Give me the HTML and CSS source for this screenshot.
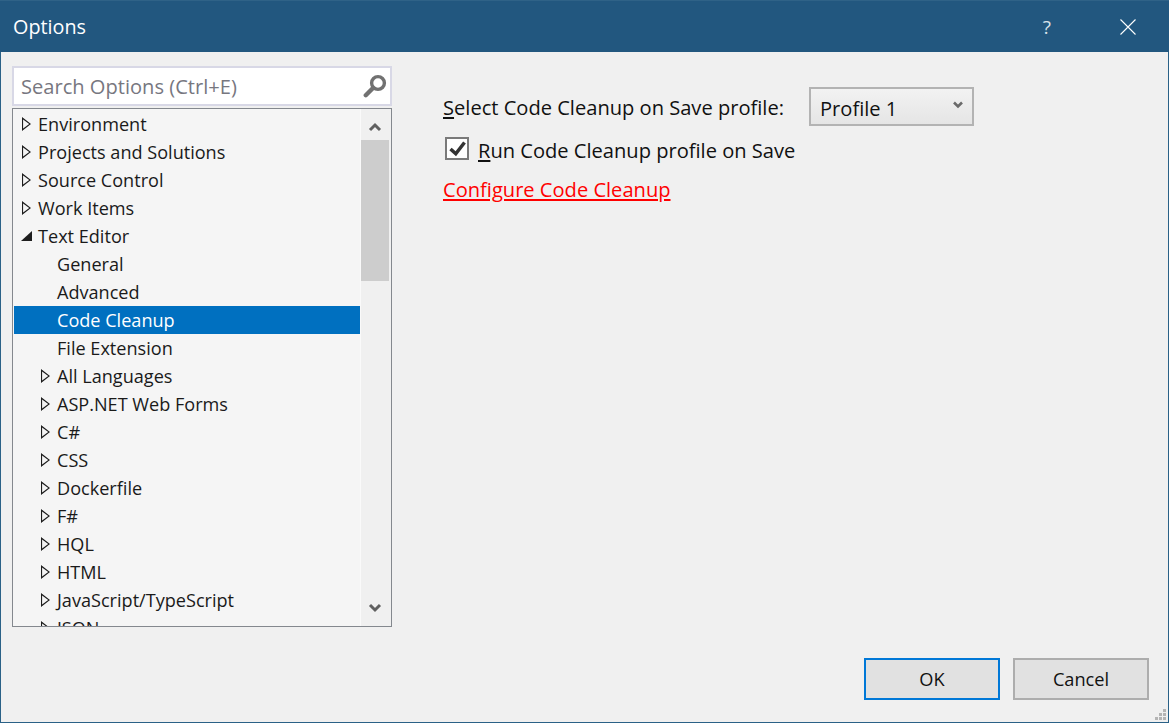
FILE: index.html
```html
<!DOCTYPE html>
<html lang="en">

<head>
    <meta charset="UTF-8">
    <meta name="viewport" content="width=device-width, initial-scale=1.0">
    <title>Options</title>
    <link rel="stylesheet" href="styles.css">
</head>

<body>
    <div class="dialog">
        <header class="titlebar">
            <span class="title">Options</span>
            <span class="help">?</span>
            <svg class="close" width="16" height="16" viewBox="0 0 16 16">
                <path d="M0.5 0.5 L15.5 15.5 M15.5 0.5 L0.5 15.5" stroke="#fff" stroke-width="1.1" fill="none" />
            </svg>
        </header>

        <main class="content">
            <aside class="sidebar">
                <div class="search">
                    <span class="search-text">Search Options (Ctrl+E)</span>
                    <svg width="24" height="24" viewBox="0 0 24 24">
                        <circle cx="15" cy="9" r="6.4" fill="none" stroke="#717171" stroke-width="3.4" />
                        <path d="M10 14 L2.8 21.2" stroke="#717171" stroke-width="4.4" stroke-linecap="round" />
                    </svg>
                </div>
                <div class="tree">
                    <ul class="rows">
                        <li class="row"><i class="arrow"></i>Environment</li>
                        <li class="row"><i class="arrow"></i>Projects and Solutions</li>
                        <li class="row"><i class="arrow"></i>Source Control</li>
                        <li class="row"><i class="arrow"></i>Work Items</li>
                        <li class="row"><i class="arrow open"></i>Text Editor</li>
                        <li class="row sub leaf">General</li>
                        <li class="row sub leaf">Advanced</li>
                        <li class="row sub leaf selected">Code Cleanup</li>
                        <li class="row sub leaf">File Extension</li>
                        <li class="row sub"><i class="arrow"></i>All Languages</li>
                        <li class="row sub"><i class="arrow"></i>ASP.NET Web Forms</li>
                        <li class="row sub"><i class="arrow"></i>C#</li>
                        <li class="row sub"><i class="arrow"></i>CSS</li>
                        <li class="row sub"><i class="arrow"></i>Dockerfile</li>
                        <li class="row sub"><i class="arrow"></i>F#</li>
                        <li class="row sub"><i class="arrow"></i>HQL</li>
                        <li class="row sub"><i class="arrow"></i>HTML</li>
                        <li class="row sub"><i class="arrow"></i>JavaScript/TypeScript</li>
                        <li class="row sub"><i class="arrow"></i>JSON</li>
                    </ul>
                    <div class="scrollbar">
                        <div class="scroll-btn">
                            <svg width="14" height="10" viewBox="0 0 14 10">
                                <path d="M2 8 L7 3 L12 8" fill="none" stroke="#606060" stroke-width="3" />
                            </svg>
                        </div>
                        <div class="thumb"></div>
                        <div class="scroll-btn down">
                            <svg width="14" height="10" viewBox="0 0 14 10">
                                <path d="M2 2 L7 7 L12 2" fill="none" stroke="#606060" stroke-width="3" />
                            </svg>
                        </div>
                    </div>
                </div>
            </aside>

            <section class="settings">
                <div class="profile-line">
                    <label class="profile-label"><u>S</u>elect Code Cleanup on Save profile:</label>
                    <div class="dropdown">
                        <span>Profile 1</span>
                        <svg width="10" height="8" viewBox="0 0 10 8">
                            <path d="M1 1.5 L5 5.5 L9 1.5" fill="none" stroke="#6a6a6a" stroke-width="2.6" />
                        </svg>
                    </div>
                </div>
                <div class="check-line">
                    <span class="checkbox">
                        <svg width="20" height="19" viewBox="0 0 20 19">
                            <path d="M3.5 10 L8.8 14.8 L17.5 3.5" fill="none" stroke="#333" stroke-width="3.5" />
                        </svg>
                    </span>
                    <span><u>R</u>un Code Cleanup profile on Save</span>
                </div>
                <a class="link" href="#">Configure Code Cleanup</a>
            </section>
        </main>

        <footer class="footer">
            <button class="btn default">OK</button>
            <button class="btn">Cancel</button>
            <svg class="grip" width="12" height="12" viewBox="0 0 12 12" fill="#b4b4b4">
                <rect x="8" y="0" width="3" height="3" />
                <rect x="4" y="4" width="3" height="3" />
                <rect x="8" y="4" width="3" height="3" />
                <rect x="0" y="8" width="3" height="3" />
                <rect x="4" y="8" width="3" height="3" />
                <rect x="8" y="8" width="3" height="3" />
            </svg>
        </footer>
    </div>
</body>

</html>
```

FILE: styles.css
```css
* {
    padding: 0;
    margin: 0;
    box-sizing: border-box;
}

body {
    width: 1169px;
    height: 723px;
    overflow: hidden;
    font-family: "Open Sans", "Noto Sans", sans-serif;
    font-size: 18.1px;
    color: #1a1a1a;
}

.dialog {
    display: flex;
    flex-direction: column;
    height: 723px;
    background: #f0f0f0;
    border: 1px solid #2a6187;
    border-top: 0;
}

.titlebar {
    display: flex;
    align-items: center;
    flex: none;
    height: 52px;
    margin: 0 -1px;
    padding: 0 33px 0 13px;
    background: #22577f;
    border-top: 1px solid #2f6287;
    color: #fff;
}

.title {
    flex: 1;
    font-size: 19.8px;
}

.help {
    margin-right: 69px;
    font-size: 19px;
    color: #d8e2ea;
}

.content {
    display: flex;
    flex: 1;
    padding: 14px 0 0 11px;
}

.sidebar {
    display: flex;
    flex-direction: column;
    width: 380px;
    height: 561px;
}

.search {
    display: flex;
    align-items: center;
    justify-content: space-between;
    height: 40px;
    padding: 0 3px 0 7px;
    background: #fff;
    border: 2px solid #d8d8e6;
    color: #77777f;
    font-size: 20.1px;
}

.tree {
    display: flex;
    height: 519px;
    margin-top: 2px;
    overflow: hidden;
    background: #f5f5f5;
    border: 1px solid #84888e;
}

.rows {
    flex: 1;
    padding: 1px 0 0 1px;
    list-style: none;
    overflow: hidden;
}

.row {
    display: flex;
    align-items: center;
    height: 28px;
    padding-left: 8px;
    white-space: nowrap;
}

.row.sub {
    padding-left: 27px;
}

.row.leaf {
    padding-left: 43px;
}

.row.selected {
    background: #0070c0;
    color: #fff;
}

.arrow {
    flex: none;
    width: 9px;
    height: 14px;
    margin-right: 7px;
    background: #1e1e1e;
    clip-path: polygon(0 0, 100% 50%, 0 100%, 0 0, 1.1px 2.4px, 1.1px 11.6px, 7.2px 7px, 1.1px 2.4px);
}

.arrow.open {
    width: 11px;
    height: 10px;
    margin: 0 6px 0 -1px;
    clip-path: polygon(100% 0, 100% 100%, 0 100%);
}

.scrollbar {
    display: flex;
    flex-direction: column;
    flex: none;
    width: 31px;
    background: #f0f0f0;
    border-left: 1px solid #fafafa;
}

.scroll-btn {
    display: flex;
    align-items: center;
    justify-content: center;
    flex: none;
    height: 31px;
    padding: 4px 2px 0 0;
}

.scroll-btn.down {
    margin-top: auto;
    height: 36px;
    padding-top: 0;
}

.thumb {
    flex: none;
    width: 28px;
    height: 141px;
    background: #cdcdcd;
}

.settings {
    padding: 21px 0 0 51px;
    color: #111;
    font-size: 20.1px;
    line-height: 27px;
}

.profile-line {
    display: flex;
    align-items: center;
}

.profile-label {
    width: 366px;
    margin-top: 2px;
}

.dropdown {
    display: flex;
    align-items: flex-start;
    justify-content: space-between;
    width: 165px;
    height: 39px;
    padding: 6px 9px 0 9px;
    background: linear-gradient(#f2f2f2, #e5e5e5);
    border: 2px solid #b3b3b3;
}

.dropdown svg {
    margin-top: 6px;
}

.check-line {
    display: flex;
    align-items: flex-start;
    gap: 9px;
    margin: 11px 0 0 2px;
}

.checkbox {
    display: flex;
    align-items: center;
    justify-content: center;
    width: 24px;
    height: 23px;
    background: #fff;
    border: 2px solid #7a7a7a;
}

.link {
    display: block;
    width: fit-content;
    margin-top: 12px;
    color: #ff0000;
}

.footer {
    position: relative;
    display: flex;
    flex: none;
    gap: 13px;
    justify-content: flex-end;
    height: 64px;
    padding: 0 19px 0 0;
}

.btn {
    width: 136px;
    height: 42px;
    background: #e1e1e1;
    border: 2px solid #adadad;
    color: #111;
    font-family: inherit;
    font-size: 18.2px;
}

.btn.default {
    border-color: #0078d7;
}

.grip {
    position: absolute;
    right: 1px;
    bottom: 1px;
}
```
